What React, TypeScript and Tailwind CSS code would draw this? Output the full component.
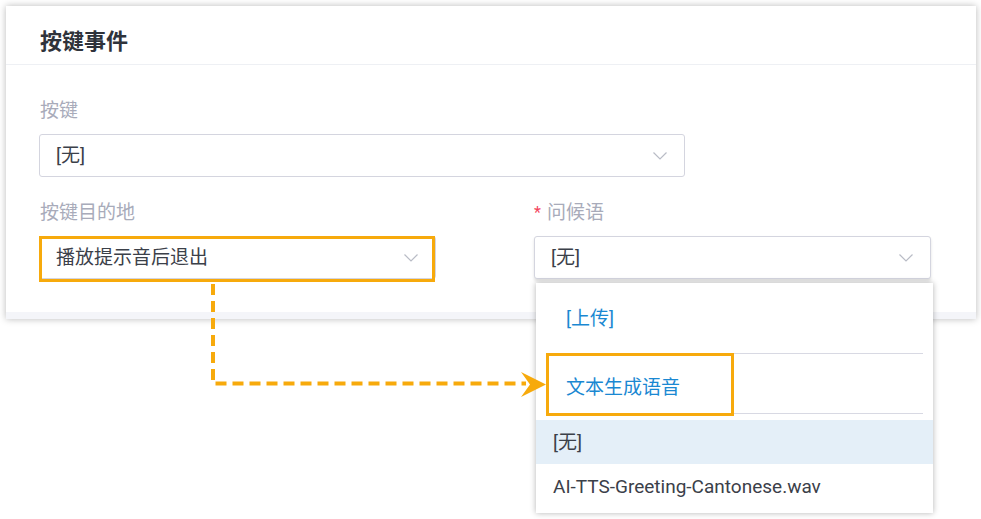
import React from "react";

const FONT = { fontFamily: 'Roboto, "Noto Sans CJK SC", sans-serif' };

function Chevron() {
  return (
    <svg width="14" height="8" viewBox="0 0 14 8" fill="none" className="shrink-0">
      <path d="M0.5 0.5 L7 7 L13.5 0.5" stroke="#b9bcc6" strokeWidth="1.2" />
    </svg>
  );
}

function Select({ value, className = "" }: { value: string; className?: string }) {
  return (
    <div
      className={
        "flex items-center justify-between h-[43px] border border-[#d4d5df] rounded-[3px] bg-white pl-[16px] pr-[17px] " +
        className
      }
    >
      <span className="text-[19px] text-[#3b4049] leading-none">{value}</span>
      <Chevron />
    </div>
  );
}

export default function App() {
  return (
    <div className="relative w-[981px] h-[519px] bg-white overflow-hidden" style={FONT}>
      <div className="pt-[6px] pl-[6px]">
        <div className="w-[970px] h-[313px] bg-white shadow-[0_0_7px_rgba(0,0,0,0.28)] flex flex-col">
          <div className="h-[59px] flex items-center pl-[34px] pt-[14px] border-b border-[#eef0f4]">
            <span className="text-[22px] font-bold text-[#2f333b] leading-none">按键事件</span>
          </div>
          <div className="flex-1 flex flex-col pl-[33px] pt-[34px]">
            <div className="text-[19px] text-[#a8abba] leading-[24px] ml-[1px]">按键</div>
            <Select value="[无]" className="w-[646px] mt-[11px]" />
            <div className="flex gap-[98px] mt-[24px]">
              <div className="w-[397px] flex flex-col">
                <div className="text-[19px] text-[#a8abba] leading-[24px] ml-[1px]">按键目的地</div>
                <div className="relative mt-[11px]">
                  <Select value="播放提示音后退出" className="w-[397px]" />
                  <div className="absolute left-0 top-0 w-[396px] h-[46px] border-[3px] border-[#f7aa0c]" />
                </div>
              </div>
              <div className="w-[397px] flex flex-col">
                <div className="flex items-center gap-[6px] text-[19px] leading-[24px]">
                  <span className="text-[#f3455d] text-[16px]">*</span>
                  <span className="text-[#a8abba]">问候语</span>
                </div>
                <Select value="[无]" className="w-[397px] mt-[11px] shadow-[0_2px_3px_rgba(0,0,0,0.12)]" />
              </div>
            </div>
          </div>
          <div className="h-[7px] bg-[#f4f5f9]" />
        </div>
      </div>

      {/* Dropdown */}
      <div className="absolute left-[536px] top-[283px] w-[397px] h-[230px] bg-white shadow-[0_0_6px_rgba(0,0,0,0.3)] flex flex-col">
        <div className="mx-[10px] flex flex-col">
          <div className="h-[71px] flex items-center pl-[20px] pt-[2px] border-b border-[#d8d9e3]">
            <span className="text-[19px] text-[#1a88d2]">[上传]</span>
          </div>
          <div className="relative h-[60px] flex items-center pl-[20px] pt-[9px] border-b border-[#d8d9e3]">
            <span className="text-[19px] text-[#1a88d2]">文本生成语音</span>
            <div className="absolute left-0 -top-[1px] w-[188px] h-[63px] border-[3px] border-[#f7aa0c]" />
          </div>
        </div>
        <div className="mt-[6px] h-[44px] bg-[#e4eff8] flex items-center pl-[17px] pt-[2px]">
          <span className="text-[19px] text-[#3b4049]">[无]</span>
        </div>
        <div className="h-[44px] flex items-center pl-[17px] pt-[2px]">
          <span className="text-[19px] text-[#3b4049]">AI-TTS-Greeting-Cantonese.wav</span>
        </div>
      </div>

      {/* Arrow */}
      <svg className="absolute left-0 top-0 pointer-events-none" width="981" height="519" viewBox="0 0 981 519">
        <path
          d="M213 284 L213 383.5 L526 383.5"
          fill="none"
          stroke="#f7aa0c"
          strokeWidth="4"
          strokeDasharray="11 6"
        />
        <polygon points="521,372 546,384.5 521,397 530,384.5" fill="#f7aa0c" />
      </svg>
    </div>
  );
}
